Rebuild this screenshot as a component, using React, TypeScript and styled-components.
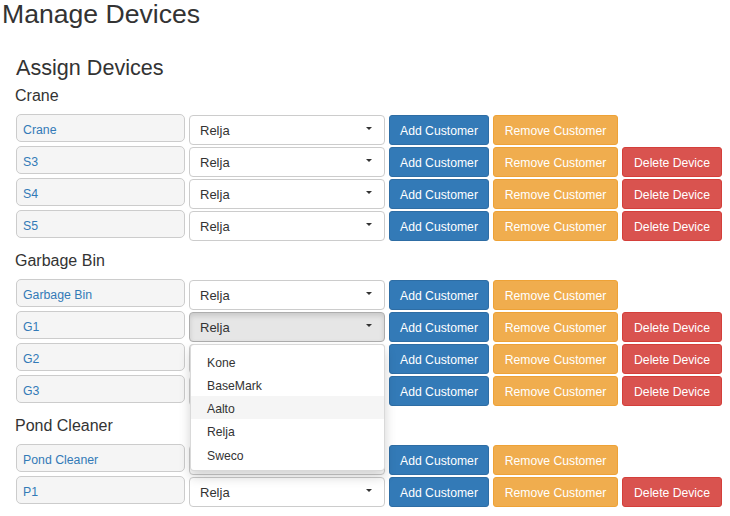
import { FC } from 'react'
import styled, { createGlobalStyle } from 'styled-components'

const GlobalStyle = createGlobalStyle`
  body {
    margin: 0;
    background: #fff;
    font-family: 'Liberation Sans', Arial, sans-serif;
    color: #333;
  }
`

const Page = styled.div`
  width: 730px;
`

const Title = styled.h1`
  margin: 0;
  padding-left: 2px;
  font-size: 26.6px;
  line-height: 28.6px;
  font-weight: 400;
  color: #333;
`

const Section = styled.section`
  padding-left: 15px;
  display: flex;
  flex-direction: column;
  gap: 11px;
`

const SectionTitle = styled.h3`
  margin: 27px 0 -3px;
  padding-left: 1px;
  font-size: 21.6px;
  line-height: 23.1px;
  font-weight: 400;
`

const Group = styled.div`
  display: flex;
  flex-direction: column;
  gap: 2px;
`

const GroupTitle = styled.h4`
  margin: 0 0 8px;
  font-size: 16px;
  line-height: 18px;
  font-weight: 400;
`

const Row = styled.div`
  display: flex;
  align-items: flex-start;
  gap: 4px;
  height: 30px;
`

const NameBox = styled.div`
  box-sizing: border-box;
  width: 169px;
  height: 28px;
  margin: -1px 0 0 1px;
  padding: 3px 6px 0;
  line-height: 24px;
  font-size: 12.3px;
  color: #337ab7;
  background: #f5f5f5;
  border: 1px solid #ccc;
  border-radius: 5px;
`

const SelectWrap = styled.div`
  position: relative;
  width: 196px;
`

const Select = styled.div<{ $open?: boolean }>`
  box-sizing: border-box;
  height: 30px;
  padding: 1px 12px 0 10px;
  display: flex;
  align-items: center;
  justify-content: space-between;
  font-size: 13px;
  line-height: 27px;
  color: #333;
  background: ${p => (p.$open ? '#e6e6e6' : '#fff')};
  border: 1px solid ${p => (p.$open ? '#adadad' : '#ccc')};
  border-radius: 4px;
  box-shadow: ${p => (p.$open ? 'inset 0 3px 5px rgba(0, 0, 0, 0.125)' : 'none')};
`

const Caret = styled.span`
  width: 0;
  height: 0;
  margin-top: -3px;
  border-top: 3px solid #333;
  border-left: 3px solid transparent;
  border-right: 3px solid transparent;
`

const Menu = styled.ul`
  position: absolute;
  top: 32px;
  left: 1px;
  right: 0;
  z-index: 10;
  margin: 0;
  padding: 5px 0 4px;
  list-style: none;
  background: #fff;
  border: 1px solid rgba(0, 0, 0, 0.15);
  border-radius: 4px;
  box-shadow: 0 6px 12px rgba(0, 0, 0, 0.175);
`

const MenuItem = styled.li<{ $hover?: boolean }>`
  padding: 5px 16px 1px;
  font-size: 12.2px;
  line-height: 17.25px;
  color: #333;
  background: ${p => (p.$hover ? '#f5f5f5' : 'transparent')};
`

const variants = {
  primary: { bg: '#337ab7', border: '#2e6da4' },
  warning: { bg: '#f0ad4e', border: '#eea236' },
  danger: { bg: '#d9534f', border: '#d43f3a' },
}

const Button = styled.button<{ $variant: keyof typeof variants; $width: number }>`
  box-sizing: border-box;
  width: ${p => p.$width}px;
  height: 30px;
  padding: 6px 0 4px;
  font-family: 'Liberation Sans', Arial, sans-serif;
  font-size: 12.2px;
  line-height: 18px;
  text-align: center;
  color: #fff;
  white-space: nowrap;
  background: ${p => variants[p.$variant].bg};
  border: 1px solid ${p => variants[p.$variant].border};
  border-radius: 3px;
`

const customers = ['Kone', 'BaseMark', 'Aalto', 'Relja', 'Sweco']

const groups = [
  { type: 'Crane', devices: ['S3', 'S4', 'S5'] },
  { type: 'Garbage Bin', devices: ['G1', 'G2', 'G3'] },
  { type: 'Pond Cleaner', devices: ['P1'] },
]

const DeviceRow: FC<{ name: string; removable?: boolean; open?: boolean }> = ({ name, removable, open }) => (
  <Row>
    <NameBox>{name}</NameBox>
    <SelectWrap>
      <Select $open={open}>
        <span>Relja</span>
        <Caret />
      </Select>
      {open && (
        <Menu>
          {customers.map(c => (
            <MenuItem key={c} $hover={c === 'Aalto'}>
              {c}
            </MenuItem>
          ))}
        </Menu>
      )}
    </SelectWrap>
    <Button $variant="primary" $width={100}>Add Customer</Button>
    <Button $variant="warning" $width={125}>Remove Customer</Button>
    {removable && <Button $variant="danger" $width={100}>Delete Device</Button>}
  </Row>
)

const App: FC = () => (
  <Page>
    <GlobalStyle />
    <Title>Manage Devices</Title>
    <Section>
      <SectionTitle>Assign Devices</SectionTitle>
      {groups.map(g => (
        <Group key={g.type}>
          <GroupTitle>{g.type}</GroupTitle>
          <DeviceRow name={g.type} />
          {g.devices.map(d => (
            <DeviceRow key={d} name={d} removable open={d === 'G1'} />
          ))}
        </Group>
      ))}
    </Section>
  </Page>
)

export default App
